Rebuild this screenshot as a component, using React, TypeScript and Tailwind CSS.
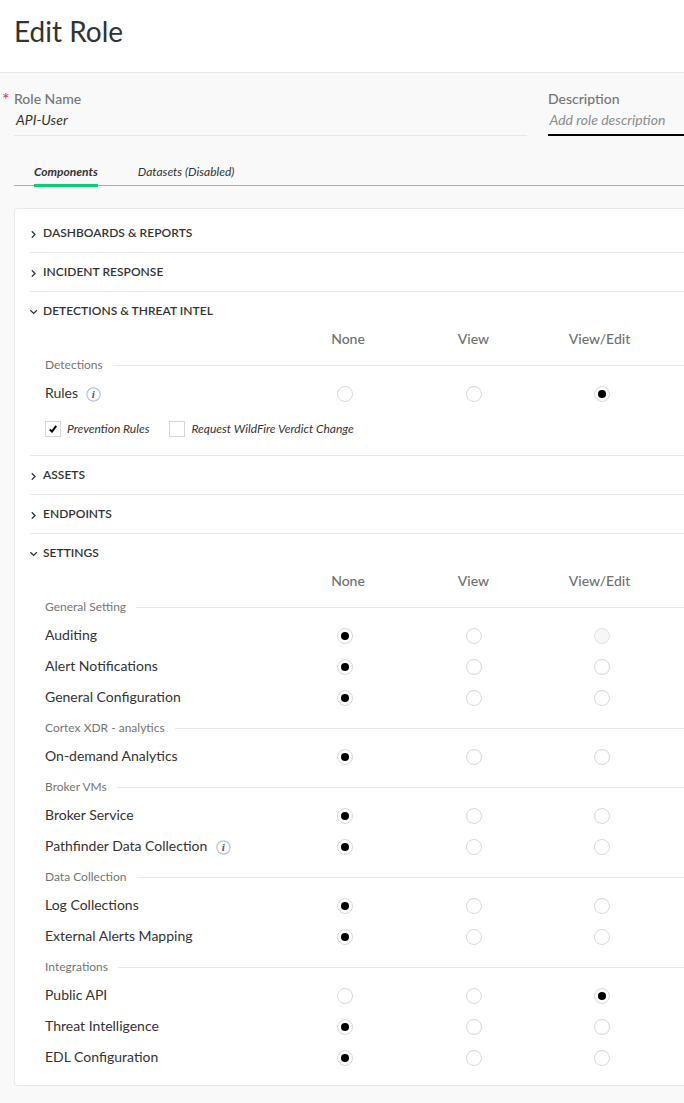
type Level = 'none' | 'view' | 'edit';

type Permission = {
  name: string;
  selected: Level;
  info?: boolean;
  editDisabled?: boolean;
};

type Group = { title: string; permissions: Permission[] };

const detectionGroups: Group[] = [
  { title: 'Detections', permissions: [{ name: 'Rules', selected: 'edit', info: true }] },
];

const settingsGroups: Group[] = [
  {
    title: 'General Setting',
    permissions: [
      { name: 'Auditing', selected: 'none', editDisabled: true },
      { name: 'Alert Notifications', selected: 'none' },
      { name: 'General Configuration', selected: 'none' },
    ],
  },
  { title: 'Cortex XDR - analytics', permissions: [{ name: 'On-demand Analytics', selected: 'none' }] },
  {
    title: 'Broker VMs',
    permissions: [
      { name: 'Broker Service', selected: 'none' },
      { name: 'Pathfinder Data Collection', selected: 'none', info: true },
    ],
  },
  {
    title: 'Data Collection',
    permissions: [
      { name: 'Log Collections', selected: 'none' },
      { name: 'External Alerts Mapping', selected: 'none' },
    ],
  },
  {
    title: 'Integrations',
    permissions: [
      { name: 'Public API', selected: 'edit' },
      { name: 'Threat Intelligence', selected: 'none' },
      { name: 'EDL Configuration', selected: 'none' },
    ],
  },
];

function Chevron({ open }: { open?: boolean }) {
  return (
    <svg width="8" height="8" viewBox="0 0 8 8" fill="none" stroke="#333" strokeWidth="1.3" className="mt-px shrink-0">
      <path d={open ? 'M0.4 2.2 L3.6 5.4 L6.8 2.2' : 'M1.8 1.3 L5 4.5 L1.8 7.7'} />
    </svg>
  );
}

function SectionHeader({ title, open }: { title: string; open?: boolean }) {
  return (
    <div className={`flex items-center gap-[5px] text-xs font-semibold tracking-[0.03px] text-[#333] ${open ? 'h-[38px]' : 'h-[39px] border-b border-[#e8e8e8]'}`}>
      <Chevron open={open} />
      <span>{title}</span>
    </div>
  );
}

function InfoIcon() {
  return (
    <svg width="15" height="15" viewBox="0 0 15 15" className="mt-[3px] shrink-0">
      <circle cx="7.5" cy="7.5" r="6.6" fill="#fff" stroke="#b4c8e1" strokeWidth="1.3" />
      <text x="7.4" y="11" textAnchor="middle" fontSize="11" fontStyle="italic" fontWeight="bold" fontFamily="Liberation Serif, serif" fill="#555">
        i
      </text>
    </svg>
  );
}

function Radio({ checked, disabled }: { checked?: boolean; disabled?: boolean }) {
  return (
    <span className={`flex size-4 items-center justify-center rounded-full border ${disabled ? 'border-[#e2e2e2] bg-[#f6f7f7]' : 'border-[#d8d8d8] bg-white'}`}>
      {checked && <span className="size-2 rounded-full bg-black" />}
    </span>
  );
}

function ColumnHeader() {
  return (
    <div className="grid h-5 grid-cols-[255px_126px_125px_127px] text-center text-sm leading-[18px] font-medium text-[#707070]">
      <span />
      <span>None</span>
      <span>View</span>
      <span>View/Edit</span>
    </div>
  );
}

function PermissionGroup({ group }: { group: Group }) {
  return (
    <div className="pl-[15px]">
      <div className="flex h-7 items-center gap-[10px] text-xs text-[#757575]">
        <span className="pt-0.5">{group.title}</span>
        <span className="mt-[3px] h-px flex-1 bg-[#e8e8e8]" />
      </div>
      {group.permissions.map((p) => (
        <div key={p.name} className="grid h-[31px] grid-cols-[292px_129px_128px_40px] items-center text-sm text-[#333]">
          <span className="flex items-center gap-[8.2px] pb-0.5">
            {p.name}
            {p.info && <InfoIcon />}
          </span>
          <Radio checked={p.selected === 'none'} />
          <Radio checked={p.selected === 'view'} />
          <Radio checked={p.selected === 'edit'} disabled={p.editDisabled} />
        </div>
      ))}
    </div>
  );
}

function Checkbox({ label, checked }: { label: string; checked?: boolean }) {
  return (
    <label className="flex items-center gap-[6px]">
      <span className="flex size-4 items-center justify-center border border-[#d5d5d5] bg-white">
        {checked && (
          <svg width="8" height="8" viewBox="0 0 8 8" fill="none" stroke="#000" strokeWidth="2">
            <path d="M0.8 4.6 L3 6.6 L7.2 0.8" />
          </svg>
        )}
      </span>
      {label}
    </label>
  );
}

export default function App() {
  return (
    <div className="h-[1103px] w-[684px] overflow-hidden bg-[#f9f9f9] font-['Lato',sans-serif] text-[#333]">
      <header className="h-[73px] border-b border-[#e8e8e8] bg-white pt-[11px] pl-[14px] text-[28px] leading-[41px]">
        Edit Role
      </header>

      <div className="flex h-[63px] pt-[17px]">
        <span className="w-[14px] pl-[2px] text-lg leading-[18px] text-[#d0354c]">*</span>
        <div className="flex w-[513px] flex-col border-b border-[#e8e8e8]">
          <span className="h-[19px] text-sm leading-[17px] font-medium text-[#757575]">Role Name</span>
          <span className="pl-0.5 text-sm leading-[22px] italic">API-User</span>
        </div>
        <div className="ml-[21px] flex flex-1 flex-col border-b-2 border-black">
          <span className="h-[19px] text-sm leading-[17px] font-medium text-[#757575]">Description</span>
          <span className="pl-[1.5px] text-sm leading-[22px] text-[#8c8c8c] italic">Add role description</span>
        </div>
      </div>

      <nav className="mt-[26px] ml-[14px] flex h-6 items-start gap-10 border-b border-[#4adeae] pl-5 text-xs leading-5 italic">
        <span className="h-[25px] border-b-3 border-[#05d072] font-bold">Components</span>
        <span>Datasets (Disabled)</span>
      </nav>

      <main className="mt-[22px] ml-[14px] h-[878px] rounded-l border border-r-0 border-[#e8e8e8] bg-white pt-[5px] pl-[15px]">
        <SectionHeader title="DASHBOARDS & REPORTS" />
        <SectionHeader title="INCIDENT RESPONSE" />
        <SectionHeader title="DETECTIONS & THREAT INTEL" open />
        <ColumnHeader />
        {detectionGroups.map((g) => (
          <PermissionGroup key={g.title} group={g} />
        ))}
        <div className="flex h-[47px] items-start gap-5 border-b border-[#e8e8e8] pt-3 pl-[15px] text-xs leading-4 italic">
          <Checkbox label="Prevention Rules" checked />
          <Checkbox label="Request WildFire Verdict Change" />
        </div>
        <SectionHeader title="ASSETS" />
        <SectionHeader title="ENDPOINTS" />
        <SectionHeader title="SETTINGS" open />
        <ColumnHeader />
        {settingsGroups.map((g) => (
          <PermissionGroup key={g.title} group={g} />
        ))}
      </main>
    </div>
  );
}
